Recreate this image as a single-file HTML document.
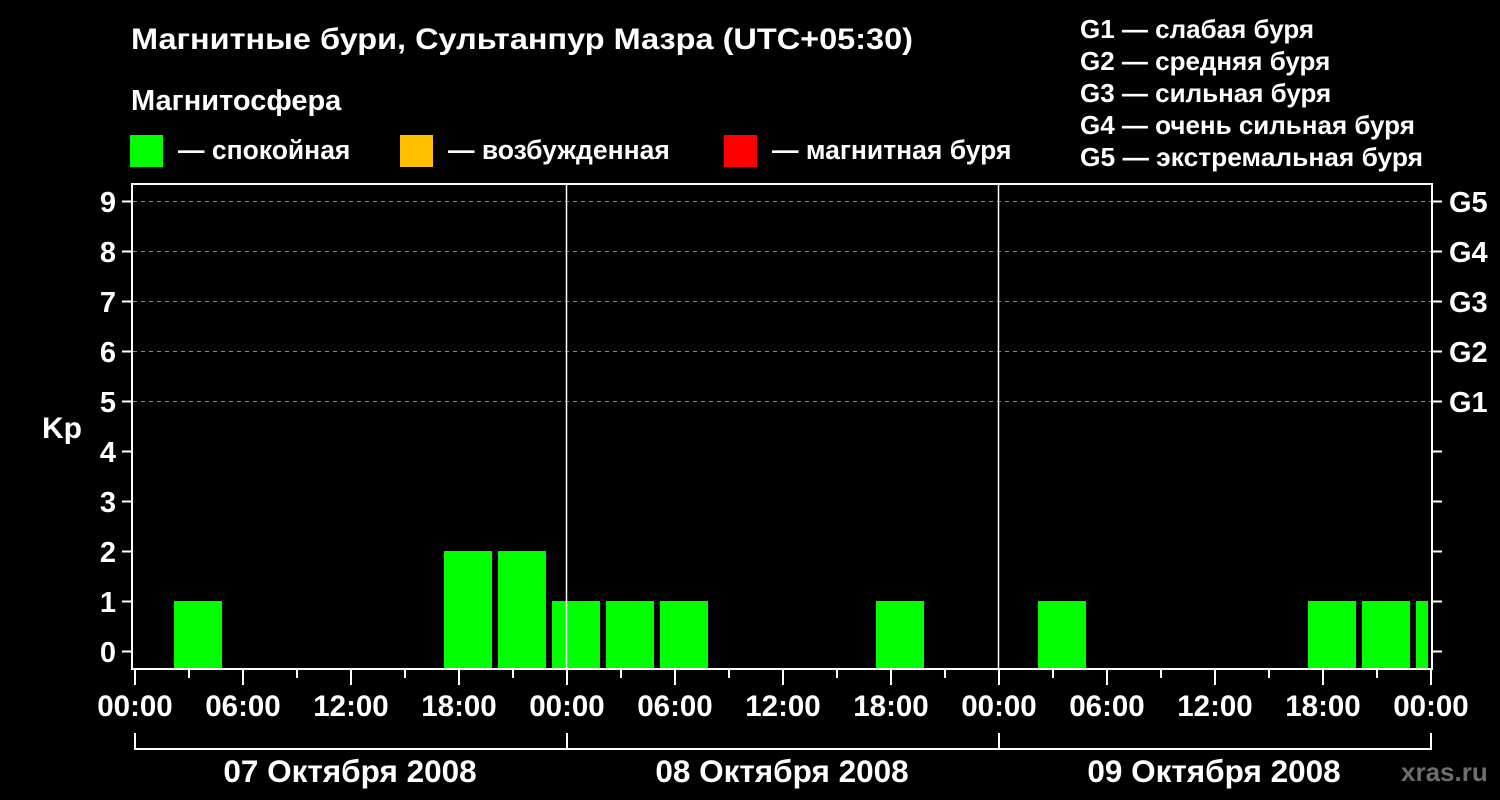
<!DOCTYPE html>
<html><head><meta charset="utf-8"><style>
html,body{margin:0;padding:0;background:#000;}
svg{display:block;}
text{font-family:"Liberation Sans",Arial,sans-serif;font-weight:bold;fill:#fff;}
</style></head><body>
<svg width="1500" height="800" viewBox="0 0 1500 800" xmlns="http://www.w3.org/2000/svg">
<rect width="1500" height="800" fill="#000"/>
<text x="131" y="49" font-size="30" textLength="782" lengthAdjust="spacingAndGlyphs">Магнитные бури, Сультанпур Мазра (UTC+05:30)</text>
<text x="131" y="110" font-size="29">Магнитосфера</text>
<rect x="130" y="135" width="33" height="32" fill="#00ff00"/>
<text x="178" y="159" font-size="26.5">— спокойная</text>
<rect x="400" y="135" width="33" height="32" fill="#ffc000"/>
<text x="448" y="159" font-size="26.5">— возбужденная</text>
<rect x="724" y="135" width="33" height="32" fill="#ff0000"/>
<text x="772" y="159" font-size="26.5">— магнитная буря</text>
<g font-size="26">
<text x="1080" y="38">G1 — слабая буря</text>
<text x="1080" y="70">G2 — средняя буря</text>
<text x="1080" y="102">G3 — сильная буря</text>
<text x="1080" y="134">G4 — очень сильная буря</text>
<text x="1080" y="166" textLength="343" lengthAdjust="spacingAndGlyphs">G5 — экстремальная буря</text>
</g>
<g stroke="#888" stroke-width="1" stroke-dasharray="4,4">
<line x1="133" y1="201.5" x2="1432" y2="201.5"/>
<line x1="133" y1="251.5" x2="1432" y2="251.5"/>
<line x1="133" y1="301.5" x2="1432" y2="301.5"/>
<line x1="133" y1="351.5" x2="1432" y2="351.5"/>
<line x1="133" y1="401.5" x2="1432" y2="401.5"/>
</g>
<g fill="#00ff00">
<rect x="174" y="601" width="48" height="67"/>
<rect x="444" y="551" width="48" height="117"/>
<rect x="498" y="551" width="48" height="117"/>
<rect x="552" y="601" width="48" height="67"/>
<rect x="606" y="601" width="48" height="67"/>
<rect x="660" y="601" width="48" height="67"/>
<rect x="876" y="601" width="48" height="67"/>
<rect x="1038" y="601" width="48" height="67"/>
<rect x="1308" y="601" width="48" height="67"/>
<rect x="1362" y="601" width="48" height="67"/>
<rect x="1416" y="601" width="12" height="67"/>
</g>
<rect x="132" y="184" width="1300" height="485" fill="none" stroke="#fff" stroke-width="2"/>
<line x1="566.5" y1="184" x2="566.5" y2="669" stroke="#fff" stroke-width="1.5"/>
<line x1="998.5" y1="184" x2="998.5" y2="669" stroke="#fff" stroke-width="1.5"/>
<g stroke="#fff" stroke-width="2">
<line x1="122" y1="201.5" x2="132" y2="201.5"/><line x1="1432" y1="201.5" x2="1442" y2="201.5"/>
<line x1="122" y1="251.5" x2="132" y2="251.5"/><line x1="1432" y1="251.5" x2="1442" y2="251.5"/>
<line x1="122" y1="301.5" x2="132" y2="301.5"/><line x1="1432" y1="301.5" x2="1442" y2="301.5"/>
<line x1="122" y1="351.5" x2="132" y2="351.5"/><line x1="1432" y1="351.5" x2="1442" y2="351.5"/>
<line x1="122" y1="401.5" x2="132" y2="401.5"/><line x1="1432" y1="401.5" x2="1442" y2="401.5"/>
<line x1="122" y1="451.5" x2="132" y2="451.5"/><line x1="1432" y1="451.5" x2="1442" y2="451.5"/>
<line x1="122" y1="501.5" x2="132" y2="501.5"/><line x1="1432" y1="501.5" x2="1442" y2="501.5"/>
<line x1="122" y1="551.5" x2="132" y2="551.5"/><line x1="1432" y1="551.5" x2="1442" y2="551.5"/>
<line x1="122" y1="601.5" x2="132" y2="601.5"/><line x1="1432" y1="601.5" x2="1442" y2="601.5"/>
<line x1="122" y1="651.5" x2="132" y2="651.5"/><line x1="1432" y1="651.5" x2="1442" y2="651.5"/>
</g>
<g font-size="29" text-anchor="end">
<text x="116" y="212">9</text><text x="116" y="262">8</text><text x="116" y="312">7</text>
<text x="116" y="362">6</text><text x="116" y="412">5</text><text x="116" y="462">4</text>
<text x="116" y="512">3</text><text x="116" y="562">2</text><text x="116" y="612">1</text>
<text x="116" y="662">0</text>
</g>
<text x="42" y="438" font-size="30">Kp</text>
<g font-size="29">
<text x="1449" y="212">G5</text><text x="1449" y="262">G4</text><text x="1449" y="312">G3</text>
<text x="1449" y="362">G2</text><text x="1449" y="412">G1</text>
</g>
<g stroke="#fff" stroke-width="2">
<line x1="135" y1="669" x2="135" y2="685"/><line x1="189" y1="669" x2="189" y2="678"/>
<line x1="243" y1="669" x2="243" y2="685"/><line x1="297" y1="669" x2="297" y2="678"/>
<line x1="351" y1="669" x2="351" y2="685"/><line x1="405" y1="669" x2="405" y2="678"/>
<line x1="459" y1="669" x2="459" y2="685"/><line x1="513" y1="669" x2="513" y2="678"/>
<line x1="567" y1="669" x2="567" y2="685"/><line x1="621" y1="669" x2="621" y2="678"/>
<line x1="675" y1="669" x2="675" y2="685"/><line x1="729" y1="669" x2="729" y2="678"/>
<line x1="783" y1="669" x2="783" y2="685"/><line x1="837" y1="669" x2="837" y2="678"/>
<line x1="891" y1="669" x2="891" y2="685"/><line x1="945" y1="669" x2="945" y2="678"/>
<line x1="999" y1="669" x2="999" y2="685"/><line x1="1053" y1="669" x2="1053" y2="678"/>
<line x1="1107" y1="669" x2="1107" y2="685"/><line x1="1161" y1="669" x2="1161" y2="678"/>
<line x1="1215" y1="669" x2="1215" y2="685"/><line x1="1269" y1="669" x2="1269" y2="678"/>
<line x1="1323" y1="669" x2="1323" y2="685"/><line x1="1377" y1="669" x2="1377" y2="678"/>
<line x1="1431" y1="669" x2="1431" y2="685"/>
<polyline points="135,733 135,749 1431,749 1431,733" fill="none"/>
<line x1="567" y1="733" x2="567" y2="749"/>
<line x1="999" y1="733" x2="999" y2="749"/>
</g>
<g font-size="29.5" text-anchor="middle">
<text x="135" y="716">00:00</text><text x="243" y="716">06:00</text><text x="351" y="716">12:00</text><text x="459" y="716">18:00</text>
<text x="567" y="716">00:00</text><text x="675" y="716">06:00</text><text x="783" y="716">12:00</text><text x="891" y="716">18:00</text>
<text x="999" y="716">00:00</text><text x="1107" y="716">06:00</text><text x="1215" y="716">12:00</text><text x="1323" y="716">18:00</text>
<text x="1431" y="716">00:00</text>
</g>
<g font-size="31.5" text-anchor="middle">
<text x="350" y="782">07 Октября 2008</text>
<text x="782" y="782">08 Октября 2008</text>
<text x="1214" y="782">09 Октября 2008</text>
</g>
<text x="1401" y="781" font-size="26" style="fill:#6e6e6e">xras.ru</text>
</svg>
</body></html>
